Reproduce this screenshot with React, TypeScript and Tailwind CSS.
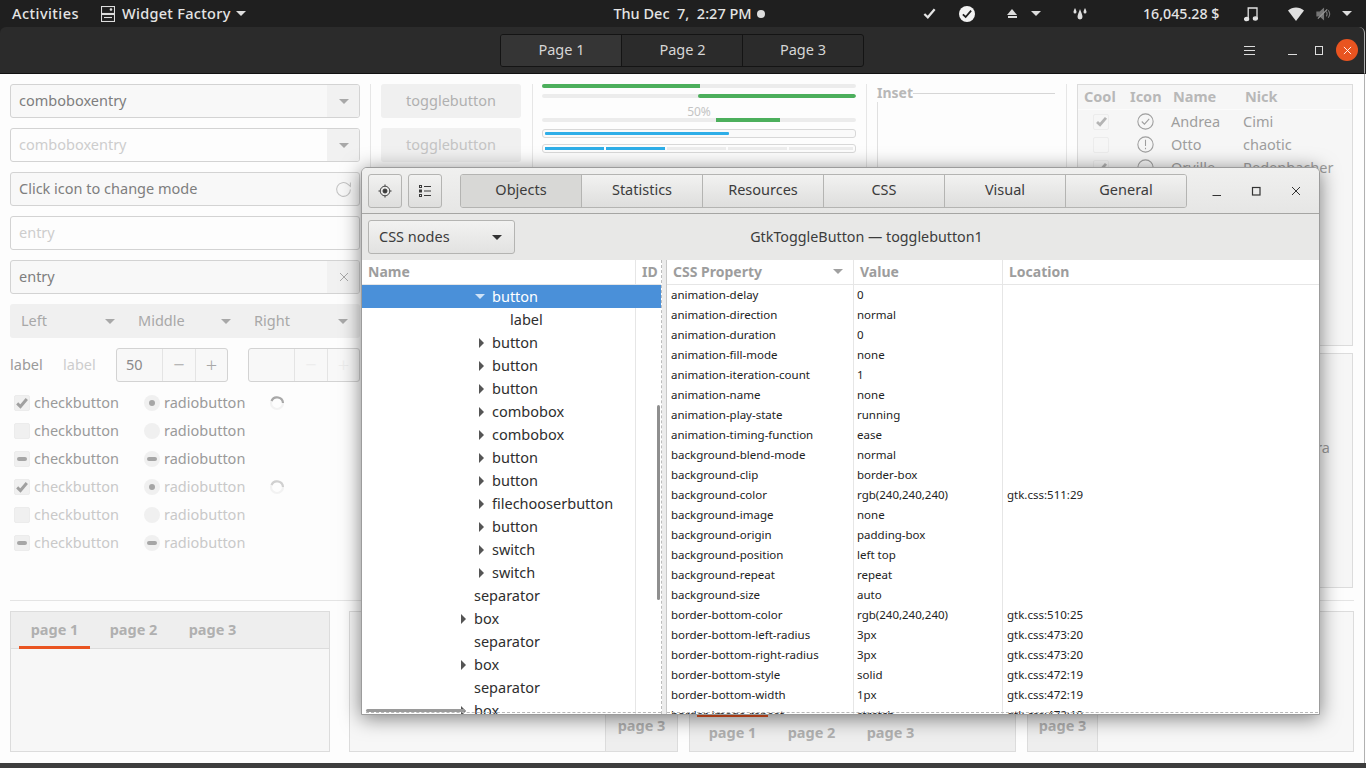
import React from "react";

const Caret = ({ c = "border-t-[#9a9a9a]", className = "" }: { c?: string; className?: string }) => (
  <span className={`inline-block w-0 h-0 border-l-[5px] border-r-[5px] border-t-[5px] border-l-transparent border-r-transparent ${c} ${className}`} />
);

const Check = ({ className = "", w = "3.4" }: { className?: string; w?: string }) => (
  <svg viewBox="0 0 16 16" className={className} fill="none" stroke="currentColor" strokeWidth={w}>
    <path d="M2.5 8.5l3.7 3.5L13.5 3.5" />
  </svg>
);

const Entry = ({ text, faded, right, icon }: { text: string; faded?: boolean; right?: React.ReactNode; icon?: React.ReactNode }) => (
  <div className={`h-[34px] flex items-stretch rounded-[3px] border border-[#d3d3d3] overflow-hidden ${faded ? "bg-[#fdfdfd]" : "bg-[#f8f8f8]"}`}>
    <div className={`flex-1 flex items-center pl-[8px] ${faded ? "text-[#cdcdcd]" : "text-[#7e7e7e]"}`}>{text}</div>
    {icon}
    {right}
  </div>
);

const ComboSide = () => (
  <div className="w-[33px] -my-px -mr-px bg-[#f1f1f1] flex items-center justify-center">
    <Caret c="border-t-[#a8a8a8]" />
  </div>
);

const CheckRow = ({ kind, faded }: { kind: "on" | "off" | "mix"; faded?: boolean }) => (
  <div className={`h-[28px] flex items-center ${faded ? "text-[#c9c9c9]" : "text-[#9a9a9a]"}`}>
    <span className="w-[16px] h-[16px] ml-[4px] mr-[4px] rounded-[2px] bg-[#f0f0f0] border border-[#ececec] flex items-center justify-center">
      {kind === "on" && <Check className="w-[14px] h-[14px] text-[#a0a0a0]" />}
      {kind === "mix" && <span className="w-[10px] h-[4px] rounded-[2px] bg-[#a6a6a6]" />}
    </span>
    <span>checkbutton</span>
  </div>
);

const RadioRow = ({ kind, faded }: { kind: "on" | "off" | "mix"; faded?: boolean }) => (
  <div className={`h-[28px] flex items-center ${faded ? "text-[#c9c9c9]" : "text-[#9a9a9a]"}`}>
    <span className="w-[16px] h-[16px] mr-[4px] rounded-full bg-[#f0f0f0] flex items-center justify-center">
      {kind === "on" && <span className="w-[6px] h-[6px] rounded-full bg-[#a6a6a6]" />}
      {kind === "mix" && <span className="w-[10px] h-[4px] rounded-[2px] bg-[#a6a6a6]" />}
    </span>
    <span>radiobutton</span>
  </div>
);

const Spinner = ({ faded }: { faded?: boolean }) => (
  <svg viewBox="0 0 16 16" className="w-[16px] h-[16px] ml-[19px]" fill="none" strokeWidth="2.2">
    <circle cx="8" cy="8" r="6" stroke="#f2f2f2" />
    <path d="M2.5 6A6 6 0 0 1 14 8" stroke={faded ? "#d0d0d0" : "#a8a8a8"} />
  </svg>
);

const Spin = ({ value, faded }: { value?: string; faded?: boolean }) => (
  <div className="w-[112px] h-[34px] flex rounded-[3px] border border-[#d3d3d3] bg-[#f8f8f8] text-[#8a8a8a]">
    <div className="w-[45px] flex items-center pl-[9px]">{value}</div>
    <div className={`w-[33px] border-l border-[#e4e4e4] flex items-center justify-center text-[20px] font-light ${faded ? "text-[#ececec]" : "text-[#a8a8a8]"}`}>−</div>
    <div className={`flex-1 border-l border-[#e4e4e4] flex items-center justify-center text-[20px] font-light ${faded ? "text-[#ececec]" : "text-[#a8a8a8]"}`}>+</div>
  </div>
);

const Track = ({ className = "", children }: { className?: string; children?: React.ReactNode }) => (
  <div className={`h-[4px] bg-[#ececec] rounded-[2px] ${className}`}>{children}</div>
);

const Tab = ({ t }: { t: string }) => (
  <span className="font-bold text-[14.5px] text-[#b0b0b0] w-[79px] text-center">{t}</span>
);

const TREE: [string, number, "r" | "d" | "n"][] = [
  ["button", 130, "d"], ["label", 148, "n"], ["button", 130, "r"], ["button", 130, "r"], ["button", 130, "r"],
  ["combobox", 130, "r"], ["combobox", 130, "r"], ["button", 130, "r"], ["button", 130, "r"], ["filechooserbutton", 130, "r"],
  ["button", 130, "r"], ["switch", 130, "r"], ["switch", 130, "r"], ["separator", 112, "n"], ["box", 112, "r"],
  ["separator", 112, "n"], ["box", 112, "r"], ["separator", 112, "n"], ["box", 112, "r"],
];

const PROPS: [string, string, string][] = [
  ["animation-delay", "0", ""], ["animation-direction", "normal", ""], ["animation-duration", "0", ""],
  ["animation-fill-mode", "none", ""], ["animation-iteration-count", "1", ""], ["animation-name", "none", ""],
  ["animation-play-state", "running", ""], ["animation-timing-function", "ease", ""], ["background-blend-mode", "normal", ""],
  ["background-clip", "border-box", ""], ["background-color", "rgb(240,240,240)", "gtk.css:511:29"], ["background-image", "none", ""],
  ["background-origin", "padding-box", ""], ["background-position", "left top", ""], ["background-repeat", "repeat", ""],
  ["background-size", "auto", ""], ["border-bottom-color", "rgb(240,240,240)", "gtk.css:510:25"],
  ["border-bottom-left-radius", "3px", "gtk.css:473:20"], ["border-bottom-right-radius", "3px", "gtk.css:473:20"],
  ["border-bottom-style", "solid", "gtk.css:472:19"], ["border-bottom-width", "1px", "gtk.css:472:19"],
  ["border-image-repeat", "stretch", "gtk.css:472:19"],
];

const Dialog = () => (
  <div className="absolute left-[361px] top-[167px] w-[959px] h-[548px] flex flex-col overflow-hidden rounded-t-[6px] border border-[#9c9c9c] bg-white shadow-[0_3px_20px_rgba(0,0,0,0.5)] text-[#2e2e2e]">
    <div className="h-[46px] shrink-0 flex items-center pl-[6px] border-b border-[#a5a5a3] bg-gradient-to-b from-[#f0f0ef] to-[#e6e6e5]">
      <button className="w-[34px] h-[34px] rounded-[3px] border border-[#b4b4b2] bg-gradient-to-b from-[#f2f2f1] to-[#dededd] flex items-center justify-center">
        <svg viewBox="0 0 16 16" className="w-[14px] h-[14px]" fill="none" stroke="#3a3a3a" strokeWidth="1.1">
          <circle cx="8" cy="8" r="5.5" /><circle cx="8" cy="8" r="2.3" fill="#3a3a3a" />
          <path d="M8 0.5V2.5M8 13.5V15.5M0.5 8H2.5M13.5 8H15.5" />
        </svg>
      </button>
      <button className="w-[34px] h-[34px] ml-[6px] rounded-[3px] border border-[#b4b4b2] bg-gradient-to-b from-[#f2f2f1] to-[#dededd] flex items-center justify-center">
        <svg viewBox="0 0 14 14" className="w-[14px] h-[14px]" fill="none" stroke="#3a3a3a" strokeWidth="1">
          <rect x="1.5" y="1.5" width="2" height="2" /><rect x="1.5" y="6" width="2" height="2" /><rect x="1.5" y="10.5" width="2" height="2" />
          <path d="M6 2.5H13M6 7H13M6 11.5H13" />
        </svg>
      </button>
      <div className="ml-[18px] w-[727px] h-[34px] flex rounded-[3px] border border-[#b4b4b2] overflow-hidden text-[#3c3c3c]">
        {["Objects", "Statistics", "Resources", "CSS", "Visual", "General"].map((t, i) => (
          <div key={t} className={`flex-1 flex items-center justify-center pb-[2px] ${i ? "border-l border-[#b4b4b2] bg-gradient-to-b from-[#f2f2f1] to-[#dededd]" : "bg-[#d8d8d6]"}`}>{t}</div>
        ))}
      </div>
      <svg viewBox="0 0 12 12" className="ml-[24px] w-[12px] h-[12px]" fill="none" stroke="#333" strokeWidth="1"><path d="M1.5 10.5H10" /></svg>
      <svg viewBox="0 0 12 12" className="ml-[27px] w-[12px] h-[12px]" fill="none" stroke="#333" strokeWidth="1.2"><rect x="2.5" y="2.5" width="7.5" height="7.5" /></svg>
      <svg viewBox="0 0 12 12" className="ml-[28px] w-[12px] h-[12px]" fill="none" stroke="#333" strokeWidth="1"><path d="M2 2L10 10M10 2L2 10" /></svg>
    </div>
    <div className="h-[46px] shrink-0 relative flex items-center pl-[6px] bg-[#e8e8e7]">
      <div className="w-[147px] h-[34px] rounded-[3px] border border-[#b4b4b2] bg-gradient-to-b from-[#f2f2f1] to-[#e2e2e1] flex items-center justify-between pl-[10px] pr-[12px] text-[#3c3c3c]">
        <span>CSS nodes</span><Caret c="border-t-[#333]" />
      </div>
      <div className="flex-1 text-center pr-[88px] text-[#3c3c3c] text-[14.3px] -ml-[13px]">GtkToggleButton — togglebutton1</div>
    </div>
    <div className="flex-1 flex min-h-0">
      <div className="w-[300px] shrink-0 relative flex flex-col overflow-hidden border-r border-dashed border-[#bcbcbc]">
        <div className="h-[25px] shrink-0 flex items-center font-bold text-[14px] text-[#9d9d9d] border-b border-[#e6e6e6]">
          <span className="w-[274px] pl-[6px] pb-[2px] h-full flex items-center border-r border-[#e6e6e6]">Name</span>
          <span className="pl-[6px] pb-[2px]">ID</span>
        </div>
        <div className="flex-1 relative">
          <div className="absolute left-[273px] top-0 bottom-0 w-px bg-[#e6e6e6]" />
          {TREE.map(([t, x, k], i) => (
            <div key={i} style={{ paddingLeft: x }} className={`h-[23px] flex items-center relative ${i === 0 ? "bg-[#4a90d9] text-white" : "text-[#2e2e2e]"}`}>
              {k === "r" && <span className="absolute top-[7px] w-0 h-0 border-t-[5px] border-b-[5px] border-l-[5px] border-t-transparent border-b-transparent border-l-[#555]" style={{ left: x - 13 }} />}
              {k === "d" && <span className="absolute top-[9px] w-0 h-0 border-l-[5px] border-r-[5px] border-t-[5px] border-l-transparent border-r-transparent border-t-[#cfe2f6]" style={{ left: x - 17 }} />}
              {t}
            </div>
          ))}
        </div>
        <div className="absolute right-[1px] top-[145px] w-[3px] h-[195px] bg-[#8f8f8f] rounded-[2px]" />
        <div className="absolute left-[4px] bottom-[2px] w-[99px] h-[3px] bg-[#9a9a9a] rounded-[2px]" />
        <div className="absolute left-[4px] right-0 bottom-[1px] border-t border-dashed border-[#b8b8b8]" />
      </div>
      <div className="w-[5px] shrink-0 bg-[#ececec] border-r border-[#c8c8c8]" />
      <div className="flex-1 relative flex flex-col overflow-hidden">
        <div className="h-[25px] shrink-0 flex items-center font-bold text-[14px] text-[#9d9d9d] border-b border-[#e6e6e6]">
          <span className="w-[187px] h-full pl-[6px] pr-[10px] pb-[2px] flex items-center justify-between border-r border-[#e6e6e6]">CSS Property<Caret c="border-t-[#a0a0a0]" /></span>
          <span className="w-[149px] h-full pl-[6px] pb-[2px] flex items-center border-r border-[#e6e6e6]">Value</span>
          <span className="pl-[6px] pb-[2px]">Location</span>
        </div>
        <div className="flex-1 text-[11.5px] text-[#222] relative">
          <div className="absolute left-[186px] top-0 bottom-0 w-px bg-[#e6e6e6]" />
          <div className="absolute left-[335px] top-0 bottom-0 w-px bg-[#e6e6e6]" />
          {PROPS.map(([a, b, c]) => (
            <div key={a} className="h-[20px] flex items-center">
              <span className="w-[187px] pl-[4px] whitespace-nowrap">{a}</span>
              <span className="w-[149px] pl-[3px]">{b}</span>
              <span className="pl-[4px]">{c}</span>
            </div>
          ))}
        </div>
        <div className="absolute left-0 right-[1px] bottom-[1px] border-t border-dashed border-[#b8b8b8]" />
      </div>
    </div>
  </div>
);

export default function App() {
  return (
    <div className="relative w-[1366px] h-[768px] overflow-hidden flex flex-col bg-[#fdfdfd] text-[14.5px] font-['Noto_Sans','Open_Sans',sans-serif]">
      {/* top bar */}
      <div className="h-[27px] shrink-0 bg-[#1f1f1f] text-[#e4e4e4] font-medium text-[14.5px] relative flex items-center">
        <span className="ml-[12px] w-[67px] whitespace-nowrap tracking-[0.45px]">Activities</span>
        <svg viewBox="0 0 14 16" className="ml-[22px] w-[14px] h-[16px]" fill="none" stroke="#ddd" strokeWidth="1.1">
          <rect x="0.5" y="0.5" width="13" height="7" /><rect x="0.5" y="8.5" width="13" height="7" />
          <path d="M3 11.5H11" /><circle cx="10" cy="3.5" r="0.8" fill="#ddd" />
        </svg>
        <span className="ml-[7px] w-[109px] whitespace-nowrap tracking-[0.3px]">Widget Factory</span>
        <Caret c="border-t-[#ddd]" className="ml-[5px]" />
        <span className="ml-[367px] w-[139px] whitespace-pre text-center text-[14.5px]">Thu Dec  7,  2:27 PM</span>
        <span className="ml-[5px] w-[8px] h-[8px] rounded-full bg-[#ddd]" />
        <Check className="ml-[157px] w-[15px] h-[15px] text-[#e4e4e4]" w="2.4" />
        <span className="ml-[22px] w-[16px] h-[16px] rounded-full bg-[#f2f2f2] flex items-center justify-center">
          <Check className="w-[12px] h-[12px] text-[#1f1f1f]" w="2.4" />
        </span>
        <span className="ml-[32px] flex flex-col items-center gap-[1px]">
          <span className="w-0 h-0 border-l-[5px] border-r-[5px] border-b-[6px] border-l-transparent border-r-transparent border-b-[#ddd]" />
          <span className="w-[9px] h-[2px] bg-[#ddd]" />
        </span>
        <Caret c="border-t-[#ddd]" className="ml-[14px]" />
        <svg viewBox="0 0 14 12" className="ml-[32px] w-[14px] h-[12px]" fill="#ddd">
          <path d="M2 0C3 2 3.5 3 3.5 4a1.5 1.5 0 0 1-3 0C.5 3 1 2 2 0zM7 1C8 4 9.5 6.6 9.5 9a2.5 2.5 0 0 1-5 0C4.5 6.6 6 4 7 1zM12 0C13 2 13.5 3 13.5 4a1.5 1.5 0 0 1-3 0C10.5 3 11 2 12 0z" />
        </svg>
        <span className="ml-[56px] w-[76px] whitespace-nowrap text-center text-[14.2px]">16,045.28 $</span>
        <svg viewBox="0 0 14 16" className="ml-[25px] w-[14px] h-[16px]" fill="none" stroke="#e4e4e4" strokeWidth="1.3">
          <path d="M4.2 13V2H13V12" /><ellipse cx="2.6" cy="13" rx="2" ry="1.6" fill="#e4e4e4" /><ellipse cx="11.4" cy="12.5" rx="2" ry="1.6" fill="#e4e4e4" />
        </svg>
        <svg viewBox="0 0 16 14" className="ml-[30px] w-[16px] h-[14px]" fill="#e0e0e0"><path d="M0 3.5C4.5-.6 11.5-.6 16 3.5L8 14z" /></svg>
        <svg viewBox="0 0 16 14" className="ml-[12px] w-[15px] h-[14px]" fill="none" stroke="#777" strokeWidth="1.2">
          <path d="M1 5H4L8 1.5V12.5L4 9H1z" fill="#777" /><path d="M11 4.5C12 6 12 8 11 9.5M13 3C15 5.5 15 8.5 13 11" /><path d="M2 12L12 2" stroke="#999" />
        </svg>
        <Caret c="border-t-[#ddd]" className="ml-[11px]" />
      </div>

      {/* header bar */}
      <div className="h-[47px] shrink-0 bg-[#1f1f1f] pr-[1px]">
        <div className="h-full bg-[#2b2b2b] border-b border-[#111] border-r-[1px] border-r-[#b0b0b0] flex items-center text-[#d6d6d6] rounded-t-[6px]">
          <div className="ml-[500px] w-[364px] h-[33px] flex rounded-[3px] border border-[#141414] overflow-hidden">
            <div className="w-[120px] bg-[#353535] flex items-center justify-center pl-[1px]">Page 1</div>
            <div className="w-[121px] border-l border-[#141414] flex items-center justify-center pl-[1px]">Page 2</div>
            <div className="flex-1 border-l border-[#141414] flex items-center justify-center">Page 3</div>
          </div>
          <div className="ml-[380px] w-[11px] flex flex-col gap-[3px]">
            <span className="h-px bg-[#ddd]" /><span className="h-px bg-[#ddd]" /><span className="h-px bg-[#ddd]" />
          </div>
          <span className="ml-[33px] w-[9px] h-px bg-[#ddd] mt-[8px]" />
          <span className="ml-[18px] w-[8px] h-[9px] border border-[#ddd]" />
          <span className="ml-[13px] w-[22px] h-[22px] rounded-full bg-[#e95420] flex items-center justify-center">
            <svg viewBox="0 0 10 10" className="w-[9px] h-[9px]" stroke="#fff" strokeWidth="1"><path d="M1 1L9 9M9 1L1 9" /></svg>
          </span>
        </div>
      </div>

      {/* content */}
      <div className="flex-1 min-h-0 flex flex-col pl-[10px] pt-[10px] pr-[10px] mr-[1px] border-r border-[#b0b0b0]">
        <div className="h-[516px] shrink-0 flex">
          <div className="w-[350px] shrink-0 flex flex-col gap-[10px]">
            <Entry text="comboboxentry" right={<ComboSide />} />
            <Entry text="comboboxentry" faded right={<ComboSide />} />
            <Entry text="Click icon to change mode" icon={
              <svg viewBox="0 0 16 16" className="w-[17px] h-[17px] self-center mr-[7px]" fill="none" stroke="#c4c4c4" strokeWidth="1"><path d="M14.5 8a6.5 6.5 0 1 1-2.2-4.9L14.5 5V1.5" /></svg>
            } />
            <Entry text="entry" faded />
            <Entry text="entry" right={
              <div className="w-[33px] -my-px -mr-px bg-[#f1f1f1] flex items-center justify-center">
                <svg viewBox="0 0 10 10" className="w-[10px] h-[10px]" stroke="#a8a8a8" strokeWidth="1"><path d="M1 1L9 9M9 1L1 9" /></svg>
              </div>
            } />
            <div className="h-[34px] flex rounded-[3px] bg-[#f0f0f0] text-[#a8a8a8]">
              <div className="w-[117px] flex items-center justify-between pl-[11px] pr-[12px]"><span>Left</span><Caret c="border-t-[#a8a8a8]" /></div>
              <div className="w-[116px] flex items-center justify-between pl-[11px] pr-[12px]"><span>Middle</span><Caret c="border-t-[#a8a8a8]" /></div>
              <div className="flex-1 flex items-center justify-between pl-[11px] pr-[12px]"><span>Right</span><Caret c="border-t-[#a8a8a8]" /></div>
            </div>
            <div className="h-[34px] flex items-center">
              <span className="w-[53px] text-[#9a9a9a]">label</span>
              <span className="w-[53px] text-[#cdcdcd]">label</span>
              <Spin value="50" />
              <span className="w-[20px]" />
              <Spin faded />
            </div>
            <div className="flex -mt-[3px]">
              <div className="w-[130px]">
                {(["on", "off", "mix"] as const).map((k) => <CheckRow key={k} kind={k} />)}
                {(["on", "off", "mix"] as const).map((k) => <CheckRow key={k} kind={k} faded />)}
              </div>
              <div className="w-[110px] pl-[4px]">
                {(["on", "off", "mix"] as const).map((k) => <RadioRow key={k} kind={k} />)}
                {(["on", "off", "mix"] as const).map((k) => <RadioRow key={k} kind={k} faded />)}
              </div>
              <div className="flex flex-col">
                <div className="h-[28px] flex items-center"><Spinner /></div>
                <div className="h-[56px]" />
                <div className="h-[28px] flex items-center"><Spinner faded /></div>
              </div>
            </div>
          </div>
          <div className="w-px bg-[#e6e6e6] ml-[10px]" />
          <div className="w-[140px] ml-[10px] flex flex-col gap-[10px]">
            <div className="h-[34px] rounded-[3px] bg-[#f0f0f0] flex items-center justify-center text-[#b0b0b0]">togglebutton</div>
            <div className="h-[34px] rounded-[3px] bg-[#f0f0f0] flex items-center justify-center text-[#c4c4c4]">togglebutton</div>
          </div>
          <div className="w-px bg-[#e6e6e6] ml-[11px]" />
          <div className="w-[314px] ml-[9px]">
            <Track className="overflow-hidden"><div className="h-full w-[158px] bg-[#4caf5c]" /></Track>
            <Track className="mt-[6px] flex justify-end overflow-hidden"><div className="h-full w-[158px] bg-[#4caf5c] rounded-[2px]" /></Track>
            <div className="h-[20px] flex items-center justify-center pt-[8px] text-[12px] text-[#c4c4c4]">50%</div>
            <Track className="pl-[174px]"><div className="h-full w-[64px] bg-[#4caf5c]" /></Track>
            <div className="mt-[7px] h-[9px] rounded-[3px] border border-[#d8d8d8] bg-[#fafafa] px-[2px] py-[2px]"><div className="h-full w-[184px] bg-[#2eaee8] rounded-[1px]" /></div>
            <div className="mt-[6px] h-[9px] rounded-[3px] border border-[#d8d8d8] px-[2px] py-[2px] flex gap-[2px]">
              <span className="w-[59px] bg-[#2eaee8]" /><span className="w-[59px] bg-[#2eaee8]" />
              <span className="w-[59px] bg-[#ededed]" /><span className="w-[59px] bg-[#ededed]" /><span className="flex-1 bg-[#ededed]" />
            </div>
          </div>
          <div className="w-px bg-[#e6e6e6] ml-[10px]" />
          <div className="w-[178px] ml-[10px] relative">
            <div className="flex items-center">
              <span className="font-bold text-[14px] text-[#b8b8b8] leading-[18px]">Inset</span>
              <span className="flex-1 h-px bg-[#d6d6d6]" />
            </div>
            <div className="w-px h-[300px] bg-[#e0e0e0]" />
          </div>
          <div className="w-px bg-[#e6e6e6] ml-[11px]" />
          <div className="ml-[10px] w-[276px] flex flex-col">
            <div className="h-[262px] shrink-0 border border-[#dcdcdc] bg-[#f6f6f6] text-[#9e9e9e]">
              <div className="h-[25px] flex items-center font-bold text-[14.5px] text-[#b8b8b8] border-b border-[#fbfbfb] pb-[1px]">
                <span className="w-[46px] pl-[6px]">Cool</span>
                <span className="w-[43px] pl-[6px]">Icon</span>
                <span className="w-[72px] pl-[6px]">Name</span>
                <span className="pl-[6px]">Nick</span>
              </div>
              {[["Andrea", "Cimi"], ["Otto", "chaotic"], ["Orville", "Redenbacher"]].map(([a, b], i) => (
                <div key={a} className="h-[23px] flex items-center">
                  <span className="w-[46px] flex justify-center">
                    <span className="w-[16px] h-[16px] rounded-[2px] border border-[#ececec] flex items-center justify-center">
                      {i !== 1 && <Check className="w-[13px] h-[13px] text-[#b4b4b4]" />}
                    </span>
                  </span>
                  <span className="w-[43px] flex justify-center">
                    <svg viewBox="0 0 16 16" className="w-[17px] h-[17px]" fill="none" stroke="#9e9e9e" strokeWidth="1">
                      <circle cx="8" cy="8" r="7.2" />
                      {i === 0 && <path d="M4.5 8l2.5 2.5 4.5-5" />}
                      {i === 1 && <path d="M8 3.5v6M8 11v1.5" />}
                    </svg>
                  </span>
                  <span className="w-[72px] pl-[4px]">{a}</span>
                  <span className="pl-[4px] whitespace-nowrap">{b}</span>
                </div>
              ))}
            </div>
            <div className="h-[235px] mt-[7px] border border-[#dcdcdc] border-b-dashed bg-[#f6f6f6] relative text-[#9a9a9a] flex items-center justify-end pr-[22px]">
              <span className="-mt-[45px]">ra</span>
            </div>
          </div>
        </div>
        <div className="h-px shrink-0 bg-[#e4e4e4]" />
        <div className="mt-[10px] h-[141px] shrink-0 flex gap-[19px]">
          <div className="w-[320px] border border-[#dcdcdc] bg-[#f7f7f7] flex flex-col">
            <div className="h-[37px] bg-[#eeeeee] border-b border-[#dcdcdc] flex items-center pl-[4px] pb-[1px] relative">
              <Tab t="page 1" /><Tab t="page 2" /><Tab t="page 3" />
              <span className="absolute left-[8px] -bottom-px w-[71px] h-[3px] bg-[#e95420]" />
            </div>
          </div>
          <div className="w-[329px] border border-[#dcdcdc] bg-[#f7f7f7] flex justify-end">
            <div className="w-[72px] bg-[#eeeeee] border-l border-[#dcdcdc] pt-[103px] flex justify-center"><Tab t="page 3" /></div>
          </div>
          <div className="w-[327px] -ml-[8px] border border-[#dcdcdc] bg-[#f7f7f7] flex flex-col justify-end">
            <div className="h-[37px] bg-[#eeeeee] flex items-center pl-[3px] relative">
              <Tab t="page 1" /><Tab t="page 2" /><Tab t="page 3" />
              <span className="absolute left-[7px] top-0 w-[71px] h-[3px] bg-[#e95420]" />
            </div>
          </div>
          <div className="w-[327px] -ml-[8px] border border-[#dcdcdc] bg-[#f7f7f7] flex">
            <div className="w-[70px] bg-[#eeeeee] border-r border-[#dcdcdc] pt-[103px] flex justify-center"><Tab t="page 3" /></div>
          </div>
        </div>
      </div>
      <div className="h-[5px] shrink-0 bg-[#3d3d3d]" />
      <Dialog />
    </div>
  );
}
